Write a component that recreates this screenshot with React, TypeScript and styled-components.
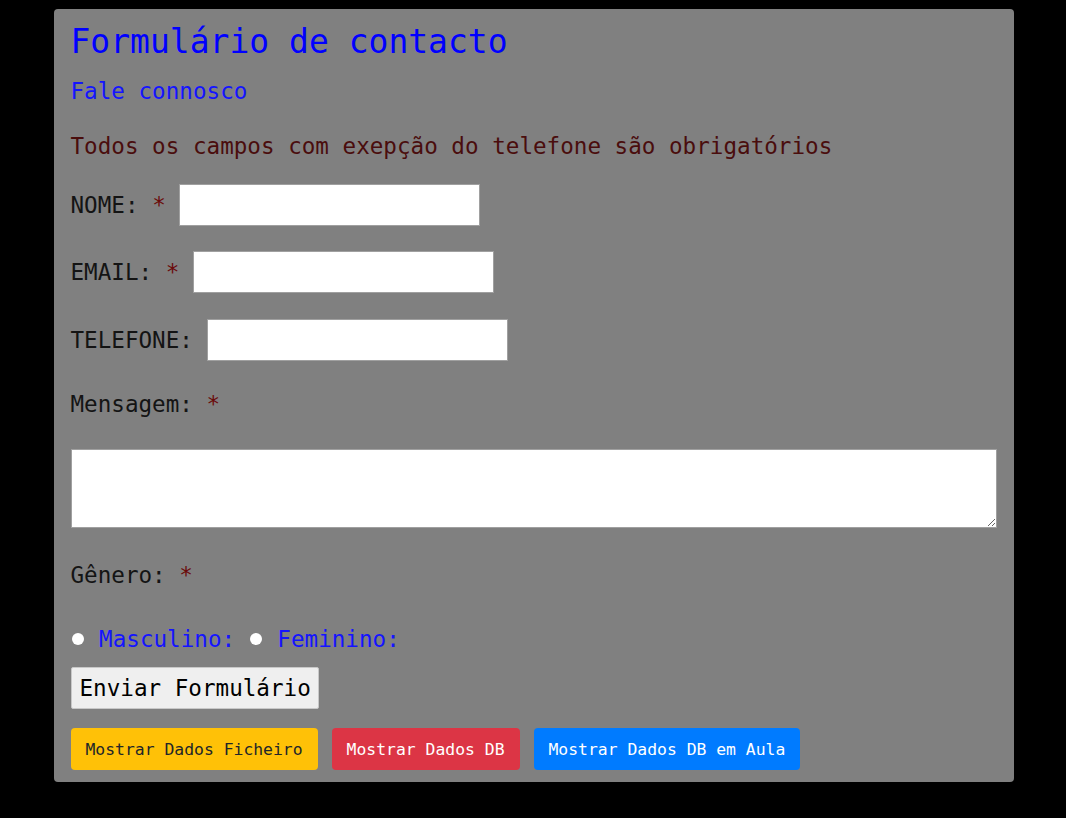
import React, {useState} from 'react'
import styled, {createGlobalStyle} from "styled-components";

const GlobalStyle = createGlobalStyle`
  html, body {
    margin: 0;
    padding: 0;
    background: #000;
  }
  body {
    font-family: "DejaVu Sans Mono", "Liberation Mono", monospace;
  }
`;

const Page = styled.div`
  min-height: 818px;
  padding-top: 9px;
  padding-left: 1px;
  box-sizing: border-box;
`;

const Card = styled.form`
  width: 960px;
  margin: 0 auto;
  box-sizing: border-box;
  background: #808080;
  border-radius: 4px;
  padding: 13px 17px 12px;
  display: flex;
  flex-direction: column;
  align-items: flex-start;
`;

const Title = styled.h1`
  margin: 0;
  font-size: 33px;
  line-height: 40px;
  font-weight: normal;
  color: #0000ff;
`;

const Text = styled.p<{ $color?: string; $mt: number }>`
  margin: ${p => p.$mt}px 0 0;
  font-size: 22.6px;
  line-height: 28px;
  color: ${p => p.$color || '#141414'};
`;

const Row = styled.label<{ $mt: number }>`
  margin-top: ${p => p.$mt}px;
  display: block;
  font-size: 22.6px;
  line-height: 42px;
  height: 42px;
  color: #141414;
  white-space: pre;
`;

const Required = styled.span`
  color: #6b0a0a;
`;

const TextInput = styled.input`
  width: 301px;
  height: 42px;
  box-sizing: border-box;
  vertical-align: top;
  border: 1px solid #a0a0a0;
  background: #fff;
  margin: 0;
  padding: 2px 4px;
  font: inherit;
  font-size: 16px;
`;

const MessageBox = styled.textarea`
  margin-top: 31px;
  width: 100%;
  height: 79px;
  box-sizing: border-box;
  border: 1px solid #a0a0a0;
  background: #fff;
  padding: 2px;
  font: inherit;
  font-size: 16px;
  display: block;
`;

const RadioRow = styled.div`
  margin-top: 36px;
  font-size: 22.6px;
  line-height: 28px;
  color: #1414ff;
  white-space: pre;
  display: flex;
  align-items: center;
`;

const Radio = styled.input`
  appearance: none;
  width: 12px;
  height: 12px;
  margin: 0 2px 0 1px;
  border-radius: 50%;
  background: #fff;
  border: none;
`;

const SubmitButton = styled.button`
  margin-top: 14px;
  height: 42px;
  padding: 0 7px 0 8px;
  background: #efefef;
  border: 1px solid #c8c8c8;
  border-radius: 2px;
  font: inherit;
  font-size: 22.6px;
  color: #000;
`;

const ButtonBar = styled.div`
  margin-top: 19px;
  display: flex;
  gap: 14px;
`;

const variants = {
  warning: {bg: '#ffc107', fg: '#212529'},
  danger: {bg: '#dc3545', fg: '#fff'},
  primary: {bg: '#007bff', fg: '#fff'},
};

const ActionButton = styled.button<{ $variant: keyof typeof variants }>`
  height: 42px;
  padding: 0 15px;
  border: none;
  border-radius: 4px;
  font: inherit;
  font-size: 16.4px;
  background: ${p => variants[p.$variant].bg};
  color: ${p => variants[p.$variant].fg};
`;

export default function App() {
  const [form, setForm] = useState({nome: '', email: '', telefone: '', mensagem: '', genero: ''});

  const changeHandler = (event: React.ChangeEvent<HTMLInputElement | HTMLTextAreaElement>) => {
    setForm({...form, [event.target.name]: event.target.value})
  }

  return (
    <Page>
      <GlobalStyle/>
      <Card onSubmit={e => e.preventDefault()}>
        <Title>Formulário de contacto</Title>
        <Text $mt={15} $color="#1414ff">Fale connosco</Text>
        <Text $mt={27} $color="#4a0d0d">Todos os campos com exepção do telefone são obrigatórios</Text>

        <Row $mt={24}>NOME: <Required>*</Required> <TextInput name="nome" value={form.nome} onChange={changeHandler}/></Row>
        <Row $mt={25}>EMAIL: <Required>*</Required> <TextInput name="email" value={form.email} onChange={changeHandler}/></Row>
        <Row $mt={26}>TELEFONE: <TextInput name="telefone" value={form.telefone} onChange={changeHandler}/></Row>

        <Text $mt={29}>Mensagem: <Required>*</Required></Text>
        <MessageBox name="mensagem" value={form.mensagem} onChange={changeHandler}/>

        <Text $mt={33}>Gênero: <Required>*</Required></Text>
        <RadioRow>
          <Radio type="radio" name="genero" value="M" onChange={changeHandler}/> Masculino: <Radio type="radio" name="genero" value="F" onChange={changeHandler}/> Feminino:
        </RadioRow>

        <SubmitButton type="submit">Enviar Formulário</SubmitButton>

        <ButtonBar>
          <ActionButton type="button" $variant="warning">Mostrar Dados Ficheiro</ActionButton>
          <ActionButton type="button" $variant="danger">Mostrar Dados DB</ActionButton>
          <ActionButton type="button" $variant="primary">Mostrar Dados DB em Aula</ActionButton>
        </ButtonBar>
      </Card>
    </Page>
  )
}
